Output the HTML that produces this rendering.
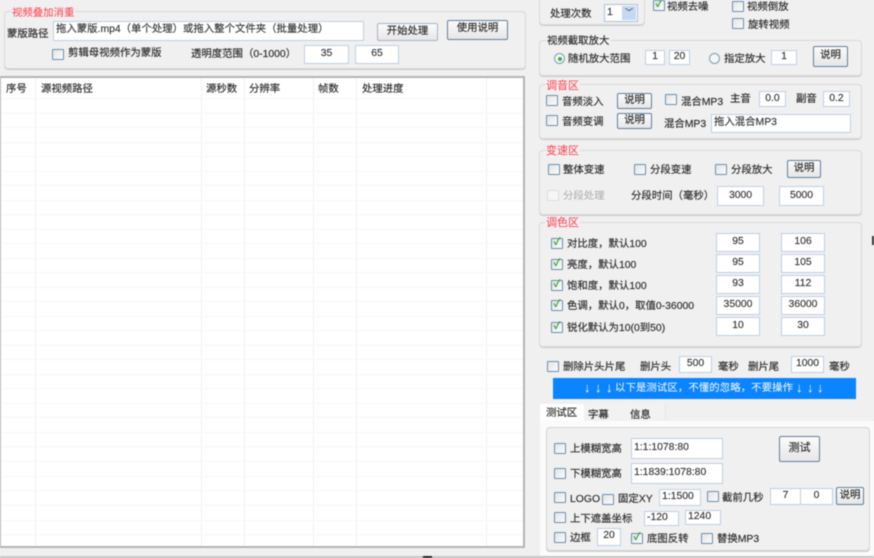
<!DOCTYPE html>
<html><head><meta charset="utf-8">
<style>
html,body{margin:0;padding:0;width:874px;height:558px;overflow:hidden;background:#f0f0f0}
#r{position:relative;width:874px;height:558px;overflow:hidden;filter:blur(.6px);font-family:"Liberation Sans","Noto Sans CJK SC",sans-serif;font-size:10.4px;color:#2a2a2a;-webkit-text-stroke:.15px #2a2a2a}
#r div{position:absolute;box-sizing:border-box}
.g{border:1px solid #d8d8d8;border-radius:4px;box-shadow:0 1px 0 #ccc}
.t{height:14px;line-height:14px;white-space:nowrap;margin-top:4px}
.tt{height:12px;line-height:12px;white-space:nowrap;background:#f0f0f0;padding:0 1px;margin-top:1px}
#r .red{color:#ff3b4a;-webkit-text-stroke:0}
.c{width:12px;height:11px;border:1.5px solid #6d8fb0;background:linear-gradient(135deg,#e4e4e4,#fbfbfb);border-radius:1px}
#r .k{color:#2aa52a;font-size:10px;line-height:8px;text-align:center;font-weight:bold;-webkit-text-stroke:0}
.i{background:#fff;border:1.5px solid #bdd0e2;text-align:center;line-height:15px;white-space:nowrap;overflow:hidden;color:#3a3a3a}
.l{text-align:left;padding-left:2px}
.b{border:1.5px solid #5f7f9c;border-radius:2px;background:linear-gradient(#fbfbfb,#e6e6e6);text-align:center;white-space:nowrap;color:#2a2a2a}
.v{width:1px;top:78px;height:468px;background:#f0f0f0}
.h{left:2px;width:521px;height:1px;background:#f7f7f7}
.rd{width:11px;height:11px;border:1px solid #7d9cb8;border-radius:50%;background:#f6f6f6}
#r .ar{top:379px;height:21px;line-height:18px;color:#fff;font-weight:bold;font-size:13px;-webkit-text-stroke:0}
</style></head><body>
<div id="r">
<!-- left group -->
<div class="g" style="left:4px;top:11px;width:522px;height:58px"></div>
<div class="tt red" style="left:11px;top:7px">视频叠加消重</div>
<div class="t" style="left:7px;top:24px">蒙版路径</div>
<div class="i l" style="left:53px;top:21px;width:311px;height:20px;line-height:16px">拖入蒙版.mp4（单个处理）或拖入整个文件夹（批量处理）</div>
<div class="b" style="left:377px;top:23px;width:61px;height:18px;line-height:16px;border-color:#a5b5c5">开始处理</div>
<div class="b" style="left:447px;top:20px;width:61px;height:20px;line-height:16px">使用说明</div>
<div class="c" style="left:52px;top:49px"></div>
<div class="t" style="left:68px;top:43px">剪辑母视频作为蒙版</div>
<div class="t" style="left:191px;top:44px">透明度范围（0-1000）</div>
<div class="i" style="left:304px;top:45px;width:45px;height:19px">35</div>
<div class="i" style="left:355px;top:45px;width:44px;height:19px">65</div>

<!-- table -->
<div style="left:0;top:76px;width:525px;height:472px;background:#fff;border:2px solid #b4b4b4;border-left-width:1px"></div>
<div class="v" style="left:35px"></div><div class="v" style="left:201px"></div><div class="v" style="left:244px"></div><div class="v" style="left:313px"></div><div class="v" style="left:356px"></div><div class="v" style="left:486px"></div>
<div class="h" style="top:98px"></div><div class="h" style="top:113px"></div><div class="h" style="top:127px"></div><div class="h" style="top:142px"></div><div class="h" style="top:156px"></div><div class="h" style="top:171px"></div><div class="h" style="top:185px"></div><div class="h" style="top:200px"></div><div class="h" style="top:214px"></div><div class="h" style="top:229px"></div><div class="h" style="top:243px"></div><div class="h" style="top:258px"></div><div class="h" style="top:272px"></div><div class="h" style="top:287px"></div><div class="h" style="top:301px"></div><div class="h" style="top:316px"></div><div class="h" style="top:330px"></div><div class="h" style="top:345px"></div><div class="h" style="top:359px"></div><div class="h" style="top:374px"></div><div class="h" style="top:388px"></div><div class="h" style="top:403px"></div><div class="h" style="top:417px"></div><div class="h" style="top:432px"></div><div class="h" style="top:446px"></div><div class="h" style="top:461px"></div><div class="h" style="top:476px"></div><div class="h" style="top:490px"></div><div class="h" style="top:505px"></div><div class="h" style="top:520px"></div><div class="h" style="top:534px"></div>
<div class="t" style="left:6px;top:79px">序号</div>
<div class="t" style="left:41px;top:79px">源视频路径</div>
<div class="t" style="left:206px;top:79px">源秒数</div>
<div class="t" style="left:249px;top:79px">分辨率</div>
<div class="t" style="left:318px;top:79px">帧数</div>
<div class="t" style="left:362px;top:79px">处理进度</div>
<div style="left:0;top:556px;width:874px;height:2px;background:#c4c4c4"></div>
<div style="left:423px;top:556px;width:9px;height:2px;background:#222"></div>
<div style="left:872px;top:236px;width:2px;height:9px;background:#333"></div>

<!-- top right -->
<div class="g" style="left:539px;top:-8px;width:106px;height:33px"></div>
<div class="t" style="left:550px;top:4px">处理次数</div>
<div class="i l" style="left:604px;top:4px;width:34px;height:18px;border-color:#a8c0da">1</div>
<div style="left:622px;top:6px;width:14px;height:14px;background:#c4d8f2;color:#5f7f9c;font-size:8px;line-height:14px;text-align:center">﹀</div>
<div class="c k" style="left:653px;top:0">✓</div>
<div class="t" style="left:667px;top:-3px">视频去噪</div>
<div class="c" style="left:732px;top:1px"></div>
<div class="t" style="left:747px;top:-3px">视频倒放</div>
<div class="c" style="left:732px;top:18px"></div>
<div class="t" style="left:748px;top:15px">旋转视频</div>

<!-- zoom -->
<div class="g" style="left:539px;top:40px;width:323px;height:36px"></div>
<div class="tt" style="left:546px;top:35px">视频截取放大</div>
<div class="rd" style="left:554px;top:53px"></div>
<div style="left:558px;top:57px;width:4px;height:4px;border-radius:50%;background:#3cb043"></div>
<div class="t" style="left:568px;top:49px">随机放大范围</div>
<div class="i" style="left:645px;top:50px;width:20px;height:15px;line-height:12px">1</div>
<div class="i" style="left:669px;top:50px;width:21px;height:15px;line-height:12px">20</div>
<div class="rd" style="left:709px;top:53px"></div>
<div class="t" style="left:724px;top:49px">指定放大</div>
<div class="i" style="left:771px;top:50px;width:26px;height:15px;line-height:12px">1</div>
<div class="b" style="left:813px;top:46px;width:35px;height:21px;line-height:18px">说明</div>

<!-- audio -->
<div class="g" style="left:539px;top:84px;width:323px;height:55px"></div>
<div class="tt red" style="left:545px;top:79px;font-size:11px">调音区</div>
<div class="c" style="left:546px;top:95px"></div>
<div class="t" style="left:562px;top:92px">音频淡入</div>
<div class="b" style="left:617px;top:93px;width:35px;height:16px;line-height:13px">说明</div>
<div class="c" style="left:665px;top:94px"></div>
<div class="t" style="left:681px;top:92px">混合MP3</div>
<div class="t" style="left:730px;top:89px">主音</div>
<div class="i" style="left:759px;top:91px;width:27px;height:16px;line-height:13px">0.0</div>
<div class="t" style="left:796px;top:89px">副音</div>
<div class="i" style="left:823px;top:91px;width:27px;height:16px;line-height:13px">0.2</div>
<div class="c" style="left:546px;top:115px"></div>
<div class="t" style="left:562px;top:112px">音频变调</div>
<div class="b" style="left:617px;top:113px;width:35px;height:16px;line-height:13px">说明</div>
<div class="t" style="left:664px;top:114px">混合MP3</div>
<div class="i l" style="left:711px;top:114px;width:140px;height:19px">拖入混合MP3</div>

<!-- speed -->
<div class="g" style="left:539px;top:150px;width:323px;height:65px"></div>
<div class="tt red" style="left:545px;top:144px;font-size:11px">变速区</div>
<div class="c" style="left:548px;top:164px"></div>
<div class="t" style="left:563px;top:160px">整体变速</div>
<div class="c" style="left:634px;top:164px"></div>
<div class="t" style="left:650px;top:160px">分段变速</div>
<div class="c" style="left:715px;top:164px"></div>
<div class="t" style="left:731px;top:160px">分段放大</div>
<div class="b" style="left:787px;top:160px;width:34px;height:18px;line-height:15px">说明</div>
<div class="c" style="left:547px;top:190px;border-color:#ddd;background:#f6f6f6"></div>
<div class="t" style="left:563px;top:186px;color:#aaa;-webkit-text-stroke:0">分段处理</div>
<div class="t" style="left:631px;top:186px">分段时间（毫秒）</div>
<div class="i" style="left:717px;top:186px;width:47px;height:20px;line-height:17px">3000</div>
<div class="i" style="left:779px;top:186px;width:45px;height:20px;line-height:17px">5000</div>

<!-- colour -->
<div class="g" style="left:539px;top:222px;width:323px;height:125px"></div>
<div class="tt red" style="left:545px;top:216px;font-size:11px">调色区</div>
<div class="c k" style="left:551px;top:238px">✓</div><div class="t" style="left:567px;top:234px">对比度，默认100</div>
<div class="i" style="left:716px;top:233px;width:44px;height:19px">95</div><div class="i" style="left:781px;top:233px;width:44px;height:19px">106</div>
<div class="c k" style="left:551px;top:259px">✓</div><div class="t" style="left:567px;top:255px">亮度，默认100</div>
<div class="i" style="left:716px;top:254px;width:44px;height:19px">95</div><div class="i" style="left:781px;top:254px;width:44px;height:19px">105</div>
<div class="c k" style="left:551px;top:280px">✓</div><div class="t" style="left:567px;top:276px">饱和度，默认100</div>
<div class="i" style="left:716px;top:275px;width:44px;height:19px">93</div><div class="i" style="left:781px;top:275px;width:44px;height:19px">112</div>
<div class="c k" style="left:551px;top:300px">✓</div><div class="t" style="left:567px;top:296px">色调，默认0，取值0-36000</div>
<div class="i" style="left:716px;top:296px;width:44px;height:19px">35000</div><div class="i" style="left:781px;top:296px;width:44px;height:19px">36000</div>
<div class="c k" style="left:551px;top:322px">✓</div><div class="t" style="left:567px;top:318px">锐化默认为10(0到50)</div>
<div class="i" style="left:716px;top:317px;width:44px;height:19px">10</div><div class="i" style="left:781px;top:317px;width:44px;height:19px">30</div>

<!-- trim -->
<div class="c" style="left:547px;top:361px"></div>
<div class="t" style="left:563px;top:357px">删除片头片尾</div>
<div class="t" style="left:640px;top:357px">删片头</div>
<div class="i" style="left:679px;top:356px;width:33px;height:17px;line-height:13px">500</div>
<div class="t" style="left:718px;top:357px">毫秒</div>
<div class="t" style="left:748px;top:357px">删片尾</div>
<div class="i" style="left:791px;top:356px;width:33px;height:17px;line-height:13px">1000</div>
<div class="t" style="left:829px;top:357px">毫秒</div>
<div style="left:553px;top:378px;width:303px;height:21px;background:#0a84ff"></div>
<div style="left:615px;top:379px;width:178px;height:21px;color:#fff;-webkit-text-stroke:0;line-height:20px;white-space:nowrap;text-align:justify;text-align-last:justify;text-justify:inter-character">以下是测试区，不懂的忽略，不要操作</div>
<div class="ar" style="left:584px">↓</div><div class="ar" style="left:595px">↓</div><div class="ar" style="left:606px">↓</div>
<div class="ar" style="left:796px">↓</div><div class="ar" style="left:807px">↓</div><div class="ar" style="left:817px">↓</div>

<!-- tabs -->
<div style="left:540px;top:404px;width:44px;height:18px;background:#fff"></div>
<div style="left:584px;top:405px;width:82px;height:16px;background:#f2f2f2;border-right:1px solid #e4e4e4"></div>
<div class="t" style="left:546px;top:403px">测试区</div>
<div class="t" style="left:588px;top:405px">字幕</div>
<div class="t" style="left:630px;top:405px">信息</div>
<div style="left:540px;top:421px;width:334px;height:135px;background:#fbfbfb"></div>
<div class="g" style="left:546px;top:427px;width:324px;height:124px;background:#f0f0f0;border-color:#d4d4d4"></div>

<div class="c" style="left:554px;top:443px"></div>
<div class="t" style="left:570px;top:439px">上模糊宽高</div>
<div class="i l" style="left:631px;top:438px;width:92px;height:21px;line-height:17px">1:1:1078:80</div>
<div class="b" style="left:779px;top:436px;width:41px;height:26px;line-height:22px;font-size:11px">测试</div>
<div class="c" style="left:554px;top:468px"></div>
<div class="t" style="left:570px;top:464px">下模糊宽高</div>
<div class="i l" style="left:631px;top:463px;width:92px;height:21px;line-height:17px">1:1839:1078:80</div>

<div class="c" style="left:554px;top:492px"></div>
<div class="t" style="left:570px;top:489px">LOGO</div>
<div class="c" style="left:602px;top:494px"></div>
<div class="t" style="left:618px;top:489px">固定XY</div>
<div class="i l" style="left:659px;top:489px;width:42px;height:17px;line-height:13px">1:1500</div>
<div class="c" style="left:707px;top:491px"></div>
<div class="t" style="left:722px;top:488px">截前几秒</div>
<div class="i" style="left:770px;top:488px;width:31px;height:17px;line-height:13px">7</div>
<div class="i" style="left:800px;top:488px;width:33px;height:17px;line-height:13px">0</div>
<div class="b" style="left:836px;top:487px;width:28px;height:18px;line-height:15px">说明</div>

<div class="c" style="left:554px;top:512px"></div>
<div class="t" style="left:570px;top:509px">上下遮盖坐标</div>
<div class="i l" style="left:644px;top:511px;width:35px;height:15px;line-height:11px">-120</div>
<div class="i l" style="left:685px;top:510px;width:36px;height:15px;line-height:11px">1240</div>

<div class="c" style="left:554px;top:532px"></div>
<div class="t" style="left:570px;top:528px">边框</div>
<div class="i" style="left:597px;top:528px;width:24px;height:18px;line-height:14px">20</div>
<div class="c k" style="left:631px;top:533px">✓</div>
<div class="t" style="left:647px;top:529px">底图反转</div>
<div class="c" style="left:701px;top:533px"></div>
<div class="t" style="left:717px;top:529px">替换MP3</div>
</div>
</body></html>
